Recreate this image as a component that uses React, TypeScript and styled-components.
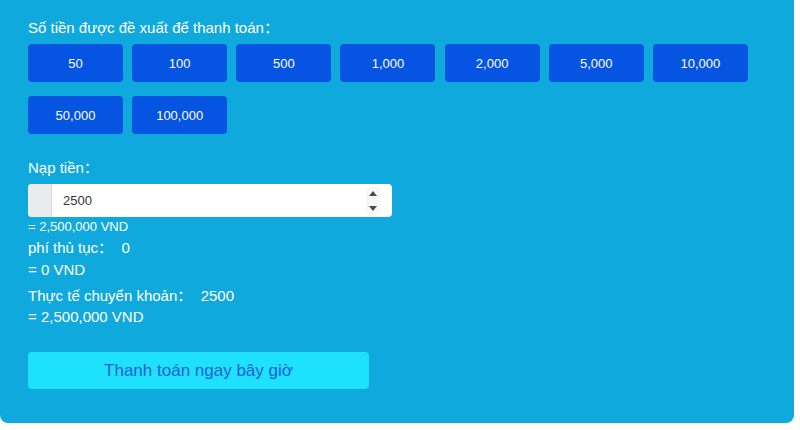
import React, { useState } from "react";
import styled, { createGlobalStyle } from "styled-components";

const Global = createGlobalStyle`
  html, body { margin: 0; padding: 0; background: #ffffff; }
  body { font-family: "Liberation Sans", "Noto Sans CJK SC", Arial, sans-serif; }
  * { box-sizing: border-box; }
`;

const FONT = `"Liberation Sans", "Noto Sans CJK SC", Arial, sans-serif`;

const Panel = styled.div`
  width: 794px;
  height: 423px;
  background: #0fa9dd;
  border-radius: 0 0 8px 8px;
  padding: 18px 28px 0 28px;
  color: #ffffff;
  display: flex;
  flex-direction: column;
  font-family: ${FONT};
`;

const Label = styled.div<{ $top?: number }>`
  font-size: 15px;
  line-height: 20px;
  margin-top: ${(p) => p.$top ?? 0}px;
  color: #ffffff;
`;

const AmountGrid = styled.div`
  display: flex;
  flex-wrap: wrap;
  column-gap: 9.17px;
  row-gap: 14px;
  margin-top: 6px;
`;

const AmountButton = styled.button`
  width: 95px;
  height: 38px;
  border: none;
  border-radius: 4px;
  background: #0654e2;
  color: #ffffff;
  font-family: ${FONT};
  font-size: 13px;
  cursor: pointer;
  padding: 0;
`;

const InputGroup = styled.div`
  display: flex;
  width: 364px;
  height: 33px;
  margin-top: 6px;
  border-radius: 4px;
  overflow: hidden;
  background: #ffffff;
`;

const Addon = styled.div`
  width: 24px;
  background: #e9ecef;
  border-right: 1px solid #d8dde2;
`;

const NumberInput = styled.input`
  flex: 1;
  min-width: 0;
  border: none;
  outline: none;
  background: #ffffff;
  padding: 0 4px 0 11px;
  font-family: ${FONT};
  font-size: 13px;
  color: #333333;
  caret-color: #222222;
  -moz-appearance: textfield;
  &::-webkit-inner-spin-button,
  &::-webkit-outer-spin-button {
    -webkit-appearance: none;
    margin: 0;
  }
`;

const Spinner = styled.div`
  width: 14px;
  margin: 3px 12px 3px 0;
  display: flex;
  flex-direction: column;
  justify-content: space-between;
  align-items: center;
  background: #f7f7f7;
  border-radius: 3px;
`;

const SpinArrow = styled.button<{ $down?: boolean }>`
  width: 14px;
  height: 12px;
  border: none;
  background: transparent;
  padding: 0;
  display: flex;
  align-items: center;
  justify-content: center;
  cursor: pointer;
  &::after {
    content: "";
    width: 0;
    height: 0;
    border-left: 4px solid transparent;
    border-right: 4px solid transparent;
    ${(p) =>
      p.$down
        ? "border-top: 5px solid #4a4a4a;"
        : "border-bottom: 5px solid #4a4a4a;"}
  }
`;

const Line = styled.div<{ $size?: number; $lh?: number; $top?: number }>`
  font-size: ${(p) => p.$size ?? 15}px;
  line-height: ${(p) => p.$lh ?? 21}px;
  margin-top: ${(p) => p.$top ?? 0}px;
  white-space: pre;
`;

const PayButton = styled.button`
  width: 341px;
  height: 37px;
  margin-top: 25px;
  border: none;
  border-radius: 4px;
  background: #1ee1fd;
  color: #1b5fd8;
  font-family: ${FONT};
  font-size: 17px;
  cursor: pointer;
`;

const amounts = [50, 100, 500, 1000, 2000, 5000, 10000, 50000, 100000];

export default function App() {
  const [value, setValue] = useState("2500");
  const n = Number(value) || 0;
  const vnd = (n * 1000).toLocaleString("en-US");
  const step = (d: number) => setValue(String(Math.max(0, n + d)));
  return (
    <>
      <Global />
      <Panel>
        <Label>Số tiền được đề xuất để thanh toán：</Label>
        <AmountGrid>
          {amounts.map((a) => (
            <AmountButton key={a} onClick={() => setValue(String(a))}>
              {a.toLocaleString("en-US")}
            </AmountButton>
          ))}
        </AmountGrid>
        <Label $top={24}>Nạp tiền：</Label>
        <InputGroup>
          <Addon />
          <NumberInput
            type="number"
            value={value}
            autoFocus
            onChange={(e) => setValue(e.target.value)}
          />
          <Spinner>
            <SpinArrow aria-label="up" onClick={() => step(1)} />
            <SpinArrow aria-label="down" $down onClick={() => step(-1)} />
          </Spinner>
        </InputGroup>
        <Line $size={13} $lh={19}>= {vnd} VND</Line>
        <Line $lh={21} $top={1}>phí thủ tục：  0</Line>
        <Line $lh={21} $top={1}>= 0 VND</Line>
        <Line $top={5}>Thực tế chuyển khoản：  {value}</Line>
        <Line>= {vnd} VND</Line>
        <PayButton>Thanh toán ngay bây giờ</PayButton>
      </Panel>
    </>
  );
}
